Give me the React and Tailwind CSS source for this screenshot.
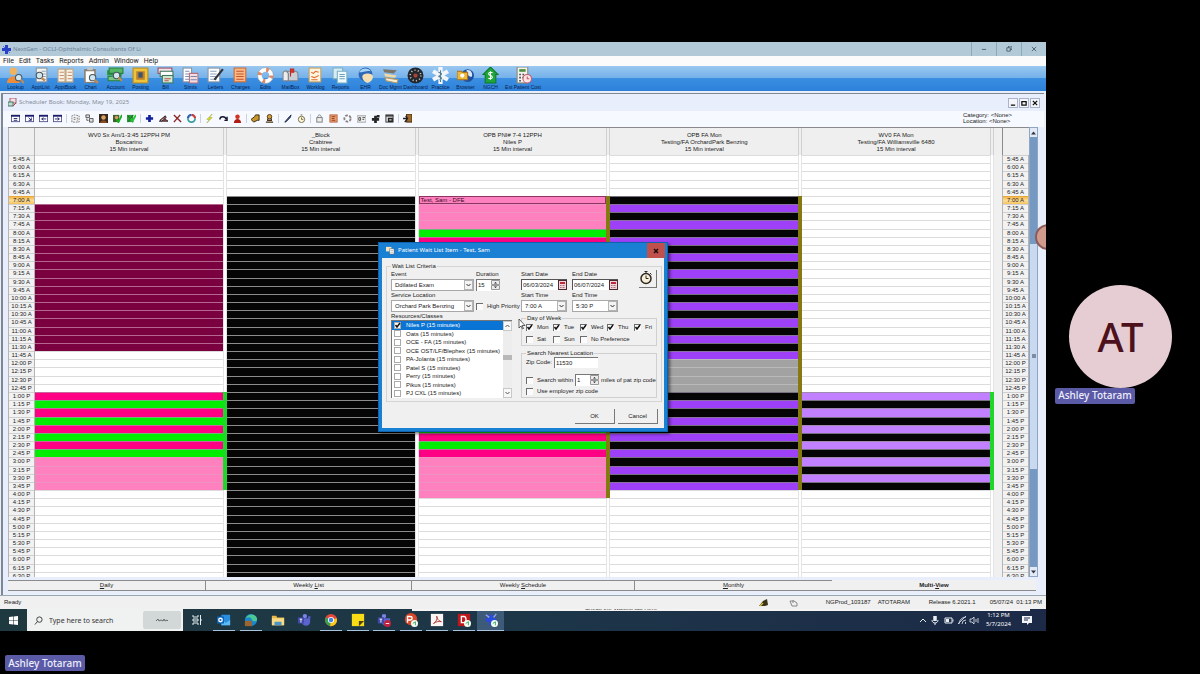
import React from "react";

const C = {
  maroon: "bg-[#7b0040] border-[#b4668e]",
  black: "bg-[#050505] border-[#8c8c8c]",
  hot: "bg-[#ff0084] border-[#c8689c]",
  green: "bg-[#00ec00] border-[#6fb47a]",
  pink: "bg-[#ff80bf] border-[#f092c0]",
  night: "bg-[#050505] border-[#77707f]",
  purple: "bg-[#9d40f8] border-[#8a72a0]",
  lav: "bg-[#c080ff] border-[#a08ab0]",
  gray: "bg-[#a2a2a2] border-[#b9b9b9]",
  none: "bg-white border-[#dcdcdc]",
};

const TIMES = Array.from({ length: 52 }, (_, i) => {
  const m = 345 + i * 15;
  const h = Math.floor(m / 60);
  return `${h > 12 ? h - 12 : h}:${String(m % 60).padStart(2, "0")} ${h < 12 ? "A" : "P"}`;
});

const PLAIN = "bg-white border-x border-[#e4e4e4]";

const COLUMNS = [
  {
    head: ["WV0 Sx Am/1-3:45 12PPH PM", "Boscarino"],
    cell: (i) => (i >= 6 && i <= 23 ? "maroon" : i >= 37 && i <= 40 ? "pink" : i >= 29 && i <= 36 ? (i % 2 ? "hot" : "green") : "none"),
    strip: (i) => (i >= 29 && i <= 40 ? "bg-[#1fd62b]" : PLAIN),
  },
  { head: ["_Block", "Crabtree"], cell: (i) => (i >= 5 ? "black" : "none"), strip: () => PLAIN },
  {
    head: ["OPB PNI# 7-4 12PPH", "Niles P"],
    cell: (i) => (i < 5 || i > 41 ? "none" : i < 9 || i > 36 ? "pink" : i % 2 ? "green" : "hot"),
    strip: (i) => (i >= 5 && i <= 41 ? "bg-[#857a10]" : PLAIN),
  },
  {
    head: ["OPB FA Mon", "Testing/FA OrchardPark Benzing"],
    cell: (i) => (i < 5 || i > 40 ? "none" : i >= 25 && i <= 28 ? "gray" : i % 2 ? "night" : "purple"),
    strip: (i) => (i >= 5 && i <= 40 ? "bg-[#857a10]" : PLAIN),
  },
  {
    head: ["WV0 FA Mon", "Testing/FA Williamsville 6480"],
    cell: (i) => (i < 29 || i > 40 ? "none" : i % 2 ? "lav" : "night"),
    strip: (i) => (i >= 29 && i <= 40 ? "bg-[#1fd62b]" : PLAIN),
  },
];

const ROWS = "grid grid-rows-[repeat(52,minmax(0,1fr))]";

function TimeColumn() {
  return (
    <div className={`${ROWS} -mb-[3px] w-[27px] shrink-0 border-x border-[#b5b5b5] bg-[#f2f2f2]`}>
      {TIMES.map((t) => (
        <div
          key={t}
          className={`border-t text-center leading-[7px] ${t === "7:00 A" ? "border-[#e8a93c] bg-gradient-to-b from-[#f6b84a] via-[#fbdc96] to-[#f6c25c]" : "border-[#d0d0d0]"}`}
        >
          {t}
        </div>
      ))}
    </div>
  );
}

function DayColumn({ col, index }) {
  return (
    <div className="-mb-[3px] flex min-w-0 flex-1">
      <div className={`${ROWS} min-w-0 flex-1`}>
        {TIMES.map((t, i) => (
          <div key={t} className={`border-t ${index === 2 && i === 5 ? "border-[#8e3464] bg-[#ff80bf]" : C[col.cell(i)]}`}>
            {index === 2 && i === 5 && (
              <div className="border-b border-l border-r border-[#8e3464] px-px leading-[6px] text-[#3b0b25]">Test, Sam - DFE</div>
            )}
          </div>
        ))}
      </div>
      <div className={`${ROWS} w-1 shrink-0`}>
        {TIMES.map((t, i) => (
          <div key={t} className={col.strip(i)} />
        ))}
      </div>
    </div>
  );
}

const Doc = ({ f = "#fff", s = "#8a93a0", x = 3, w = 10 }) => <rect x={x} y="1" width={w} height="13" fill={f} stroke={s} />;
const Lens = ({ x = 9, y = 9 }) => (
  <g>
    <circle cx={x} cy={y} r="3" fill="#cfe6ee" stroke="#4a5560" />
    <path d={`M${x + 2} ${y + 2}l3 3`} stroke="#c28b52" strokeWidth="2" />
  </g>
);
const Lines = ({ c = "#8ba3bd", x = 5, w = 6 }) => <path d={`M${x} 4h${w}M${x} 6.500h${w}M${x} 9h${w}M${x} 11.500h${w}`} stroke={c} />;

const APP_ICONS = [
  ["Lookup", <><circle cx="6" cy="4" r="3.500" fill="#f2b35e" /><path d="M0 15c0-8 12-8 12 0z" fill="#ee8c3a" /><Lens x={11} y={10} /></>],
  ["ApptList", <><Doc x={4} w={10} f="#f4f4ec" /><Lines x={9} w={4} /><Lens x={7} y={8} /></>],
  ["ApptBook", <><path d="M1 2h6.500v12H1zM8.500 2H15v12H8.500z" fill="#f8f2e6" stroke="#c2a985" /><path d="M2.500 5h4M2.500 8h4M2.500 11h4M10 5h4M10 8h4M10 11h4" stroke="#c88f69" /></>],
  ["Chart", <><rect x="2" y="2" width="11" height="13" fill="#8d8172" /><rect x="3.500" y="4" width="8" height="10" fill="#fff" /><rect x="5" y="0" width="5" height="3" fill="#bfc6cc" /><Lens x={10} y={10} /></>],
  ["Account", <><path d="M0 3h14v5H0z" fill="#2d9c47" /><path d="M2 1h13v5H2z" fill="#54b765" stroke="#257f3a" /><path d="M1 9l12-1v5H1z" fill="#79c780" stroke="#257f3a" /><Lens x={9} y={8} /></>],
  ["Posting", <><rect x="1" y="1" width="14" height="14" fill="#efc33c" stroke="#b98c1c" /><rect x="4" y="4" width="8" height="8" fill="#b98130" /><rect x="6" y="5" width="4" height="5" fill="#41546e" /></>],
  ["Bill", <><rect x="1" y="1" width="13" height="5" fill="#f4e4ea" stroke="#9c4b60" /><rect x="3" y="4" width="12" height="5" fill="#fff" stroke="#3e7a60" /><rect x="5" y="8" width="10" height="7" fill="#cfe8d2" stroke="#3e7a60" /><path d="M7 11h6M7 13h4" stroke="#c24f4f" /></>],
  ["Stmts", <><Doc x={1} w={8} /><Lines x={3} w={4} c="#7f8fb0" /><path d="M7 6h8v9H7z" fill="#f4dce0" stroke="#b8727f" /><path d="M8 9h6M8 12h6" stroke="#7787ab" /></>],
  ["Letters", <><Doc x={1} w={11} /><Lines x={3} w={6} /><path d="M15 2L7 12" stroke="#31353c" strokeWidth="2" /></>],
  ["Charges", <><Doc x={2} w={11} f="#f9b988" s="#d4692c" /><Lines x={4} w={7} c="#c4562a" /></>],
  ["Edits", <><circle cx="8" cy="8" r="5.500" fill="none" stroke="#fff" strokeWidth="4" /><circle cx="8" cy="8" r="5.500" fill="none" stroke="#de8a63" strokeWidth="4" strokeDasharray="2.500 6.140" /><circle cx="8" cy="8" r="7.500" fill="none" stroke="#8d99a8" strokeWidth=".6" /></>],
  ["MailBox", <><path d="M1 6c0-3 5-3 5 0v7H1z" fill="#ececec" stroke="#888" /><path d="M4 4h8c3 0 3 2 3 3v6H6V6z" fill="#c9ced4" stroke="#7f868e" /><path d="M8 9V2h3v3H9" fill="#d33a2f" stroke="#c32820" /></>],
  ["Worklog", <><Doc x={2} w={11} f="#fff5df" s="#cba25a" /><path d="M4 5l2 1 2-2 3 1M4 9l3 1 4-2M4 12h6" stroke="#e06c2d" fill="none" /></>],
  ["Reports", <><path d="M1 1h9v10H1z" fill="#d6ecf3" stroke="#7eafc2" /><path d="M5 4h9v11H5z" fill="#eef9fc" stroke="#7eafc2" /><path d="M7 7h5M7 9h5M7 11h5" stroke="#6ca0b8" /></>],
  ["EHR", <><circle cx="8" cy="7" r="6.500" fill="#2c69b8" /><path d="M2 5c3-5 9-4 11-1-4-1-7 1-11 1z" fill="#a8d2f4" /><path d="M5 9c0-4 10-4 10 0 0 3-2 5-5 6-3-1-5-3-5-6z" fill="#f5dfb0" /></>],
  ["Doc Mgmt", <><path d="M1 2l13 1-3 3-9-1z" fill="#7d7468" /><path d="M2 6l12 2-2 2-9-1z" fill="#f0d9a4" /><path d="M3 10l12 2-1 3-10-2z" fill="#f7eed6" stroke="#b89b62" /></>],
  ["Dashboard", <><circle cx="8" cy="8" r="7.500" fill="#24272c" /><circle cx="8" cy="8" r="5" fill="none" stroke="#c7cbd0" strokeDasharray="1 2.140" strokeWidth="1.500" /><circle cx="8" cy="8" r="2" fill="#a7443c" /></>],
  ["Practice", <><path d="M8 0v16M1 4l14 8M15 4L1 12" stroke="#f2f6fa" strokeWidth="4" /><path d="M8 3v11M6 5c4 1 4 2 0 4M6 9c4 1 4 2 1 3" stroke="#4d7e8e" fill="none" /></>],
  ["Browser", <><circle cx="10" cy="8" r="6" fill="#1e4fa0" /><path d="M9 3c4-1 6 3 5 6-2 1-5-2-5-6z" fill="#d8e8f8" /><path d="M0 4h4l1 1h5v7H0z" fill="#efb637" stroke="#a8721c" /><circle cx="5" cy="8" r="2" fill="#fff" /></>],
  ["NGCH", <><path d="M8 0l7 7h-2v8H3V7H1z" fill="#1fa53c" stroke="#0e7a29" /><path d="M10 5.500c-4-1.500-5 1.500-2 2.500s2 4-2 2.500M8 4v8" stroke="#fff" fill="none" /></>],
  ["Est Patient Cost", <><rect x="2" y="0" width="10" height="15" fill="#f3f3ee" stroke="#8d8878" /><rect x="4" y="2" width="6" height="2.500" fill="#4d8f43" /><path d="M4 7h1.500M7 7h1.500M4 10h1.500M7 10h1.500M4 13h1.500" stroke="#444" strokeWidth="1.500" /><circle cx="11.500" cy="11" r="4" fill="#fbe3e6" stroke="#c45a68" /><path d="M11.500 9v2h2" stroke="#c45a68" fill="none" /></>],
];

const Cal = ({ d }) => (
  <>
    <rect x=".5" y="1.500" width="9" height="7" fill="#fff" stroke="#55558f" />
    <path d="M0 2h10" stroke="#1c1c6c" strokeWidth="2" />
    <path d={d} fill="none" stroke="#20206a" />
  </>
);

const TOOL_GROUPS = [
  [
    ["Day list", <Cal d="M3 5h4M3 7h4" />],
    ["Go to date", <Cal d="M4 4l3 3M7 4v3H4" />],
    ["Previous", <Cal d="M8 5.500H3M5 4L3 5.500 5 7" />],
    ["Next", <Cal d="M2 5.500h5M5 4l2 1.500L5 7" />],
  ],
  [
    ["Select", <path d="M1 9V2l3-1 5 1v7zM3 4h3M3 6h2M7 4v4" fill="#f5f5f5" stroke="#777" strokeDasharray="2 1" />],
    ["Split", <><path d="M1 1h4v3H1zM5 5h4v4H5z" fill="#ddd" stroke="#555" /><path d="M2 5v2h2" stroke="#555" fill="none" /></>],
    ["Patient", <><rect width="10" height="10" y="0" fill="#35281c" /><circle cx="5" cy="4" r="2.500" fill="#dba065" /><path d="M1 10c1-4 7-4 8 0z" fill="#8a4a22" /></>],
    ["Check in", <><rect x="0" y="1" width="7" height="8" fill="#40602c" /><circle cx="4" cy="4" r="2" fill="#d89a60" /><path d="M4 6l2 3 4-8" stroke="#10b020" strokeWidth="2" fill="none" /></>],
    ["Check out", <><rect x="0" y="1" width="7" height="8" fill="#2f9a3a" /><path d="M1 2l6 7M7 1L1 9" stroke="#126a1c" /><path d="M4 5l2 3 4-7" stroke="#26c436" strokeWidth="2" fill="none" /></>],
  ],
  [
    ["Add", <path d="M5 1v8M1 5h8" stroke="#10209c" strokeWidth="3" />],
    ["Edit", <path d="M0 8h10L6 5M1 7l6-5 1 2-5 4z" fill="#a05050" stroke="#2c2224" />],
    ["Delete", <path d="M1 1l8 8M8 1L1 9" stroke="#8d2320" strokeWidth="1.500" />],
    ["Refresh", <><path d="M1 5a4 4 0 014-4" stroke="#2a60b8" strokeWidth="2.500" fill="none" /><path d="M5 1a4 4 0 014 4" stroke="#c43a3a" strokeWidth="2.500" fill="none" /><path d="M9 5a4 4 0 01-8 0" stroke="#38a0a0" strokeWidth="2" fill="none" /></>],
  ],
  [
    ["Quick", <path d="M8 0L2 6h3L2 10l6-6H5z" fill="#e4e020" stroke="#8a9a18" strokeWidth=".5" />],
    ["Redo", <path d="M1 6c0-4 6-4 7 0M9 3v4H6" stroke="#15152c" fill="none" strokeWidth="1.500" />],
    ["Alert", <><circle cx="5" cy="3" r="2.500" fill="#d23220" /><path d="M1 10c0-6 8-6 8 0z" fill="#b01c14" /></>],
  ],
  [
    ["Move", <path d="M0 6l4-3 1-2h4v6H7L3 9z" fill="#c9962c" stroke="#352408" />],
    ["Stamp", <><circle cx="5" cy="3" r="2.500" fill="#d6a23c" stroke="#4a3210" /><path d="M1 9h8M3 5v2h4V5" stroke="#4a3210" strokeWidth="1.500" fill="none" /></>],
  ],
  [
    ["Draw", <path d="M2 9l5-6 2-2-1 3-5 5z" fill="#45608c" stroke="#1d2744" />],
    ["Clock", <><circle cx="5" cy="6" r="3.500" fill="#fff8d8" stroke="#6c6440" /><path d="M5 4v2h2M4 1h2" stroke="#6c6440" fill="none" /></>],
  ],
  [
    ["Lock", <><rect x="2" y="4" width="6" height="5" fill="#eee" stroke="#777" /><path d="M3 4c0-4 4-4 4 0" fill="none" stroke="#777" /></>],
    ["Charges", <><rect x="1" y="1" width="8" height="8" fill="#eca070" stroke="#b8623c" /><path d="M3 3h4M3 5h3M3 7h4" stroke="#8c3a1c" /></>],
    ["Help ring", <circle cx="5" cy="5" r="3.500" fill="none" stroke="#8a8080" strokeWidth="2" strokeDasharray="3 1.500" />],
    ["Card", <><rect x="0" y="2" width="10" height="7" fill="#f4f4f4" stroke="#999" /><path d="M2 4h2v3H2zM6 4h3M6 6h2" stroke="#444" fill="none" /></>],
    ["Medical", <path d="M1 6h8M5 2v8M8 1v3" stroke="#262626" strokeWidth="3" />],
    ["Schedule", <><rect x="1" y="1" width="8" height="8" fill="#ddd" stroke="#333" /><path d="M1 2h8M4 5h4v3H4z" stroke="#222" strokeWidth="1.500" fill="none" /></>],
  ],
  [["Exit", <><rect x="4" y="0" width="6" height="9" fill="#a06a28" stroke="#3a240c" /><path d="M0 5h5M3 2l2 3-3 4" stroke="#202020" strokeWidth="1.500" fill="none" /></>]],
];

function Check({ label, checked, className = "" }) {
  return (
    <label className={`flex items-center gap-1 whitespace-nowrap ${className}`}>
      <span className="relative size-[7px] shrink-0">
        <input type="checkbox" defaultChecked={checked} className="peer block size-[7px] appearance-none border-l border-t border-[#6c6c6c] bg-white/70" />
        <svg viewBox="0 0 7 7" className="pointer-events-none absolute inset-0 hidden size-[7px] peer-checked:block">
          <path d="M1.500 3l1.500 2 3-4" fill="none" stroke="#111" strokeWidth="1.500" />
        </svg>
      </span>
      {label}
    </label>
  );
}

function Select({ label, value, className }) {
  return (
    <div className={`flex shrink-0 flex-col ${className}`}>
      <label htmlFor={label} className="h-[9px]">{label}</label>
      <span className="relative">
        <select id={label} className="block h-3 w-full appearance-none rounded-none border border-[#a8a8a8] bg-white pl-[3px]">
          <option>{value}</option>
        </select>
        <svg viewBox="0 0 9 10" className="pointer-events-none absolute right-px top-px h-[10px] w-[9px]">
          <rect x=".5" y=".5" width="8" height="9" fill="#f4f4f4" stroke="#b4b4b4" />
          <path d="M2.500 4l2 2 2-2" fill="none" stroke="#333" />
        </svg>
      </span>
    </div>
  );
}

function Spinner({ id, value, label }) {
  return (
    <span className="flex h-3 w-6 shrink-0 border-l border-t border-[#777] bg-white">
      <input id={id} aria-label={label} defaultValue={value} className="w-3 min-w-0 flex-1 bg-transparent pl-px" />
      <svg viewBox="0 0 9 10" className="h-[10px] w-[9px] shrink-0">
        <path d="M.5.500h8v4h-8zM.5 5.500h8v4h-8z" fill="#ececec" stroke="#999" />
        <path d="M3 3.500L4.500 2 6 3.500zM3 6.500L4.500 8 6 6.500z" fill="#222" />
      </svg>
    </span>
  );
}

function DateField({ label, value }) {
  return (
    <div className="flex w-[46px] flex-col">
      <label htmlFor={label} className="h-[9px]">{label}</label>
      <span className="flex h-[11px] items-center border-l border-t border-[#555] bg-white">
        <input id={label} defaultValue={value} className="min-w-0 flex-1 bg-transparent pl-px" />
        <button aria-label={`Pick ${label}`} className="shrink-0">
          <svg viewBox="0 0 9 10" className="block h-[10px] w-[9px]">
            <rect x=".5" y=".5" width="8" height="9" fill="#f0d4d8" stroke="#4a2a30" />
            <path d="M2 3h5" stroke="#c2283c" strokeWidth="2" />
            <path d="M2 5.500h5M2 7.500h5" stroke="#a8707c" strokeDasharray="1 .5" />
          </svg>
        </button>
      </span>
    </div>
  );
}

const RESOURCES = ["Niles P", "Oats", "OCE - FA", "OCE OST/LF/Blephex", "PA-Jolanta", "Patel S", "Perry", "Pikus", "PJ CXL"];

function WaitListDialog() {
  return (
    <section role="dialog" aria-label="Patient Wait List Item" className="absolute left-[378px] top-[200px] z-10 w-[290px] border border-[#0f62ac] bg-[#1a80d4] px-[3px] pb-[3px] text-[#222] shadow-[2px_2px_3px_rgba(0,0,0,.5)]">
      <header className="flex h-[15px] items-center font-['Noto_Sans',sans-serif] text-white">
        <svg viewBox="0 0 10 10" className="ml-1 size-[9px]">
          <rect x="0" y="1" width="6" height="5" fill="#f5e6c0" /><path d="M4 3h5v6H4z" fill="#fff" stroke="#444" strokeWidth=".5" /><path d="M5 5h3M5 7h3" stroke="#888" strokeWidth=".6" />
        </svg>
        <h2 className="ml-[3px] flex-1">Patient Wait List Item - Test, Sam</h2>
        <button aria-label="Close" className="-mr-px flex h-[15px] w-[18px] items-center justify-center bg-[#c0504c]">
          <svg viewBox="0 0 6 6" className="size-[6px]"><path d="M1 1l4 4M5 1L1 5" stroke="#1c0a0a" strokeWidth="1.500" /></svg>
        </button>
      </header>
      <div className="bg-[#f0f0f0] pb-1 pl-1 pr-[6px] pt-1">
        <fieldset className="border border-[#d4d4d4] px-1 pb-[3px]">
          <legend className="px-px leading-[8px]">Wait List Criteria</legend>
          <div className="flex gap-[3px]">
            <div className="flex w-[127px] shrink-0 flex-col">
              <div className="flex gap-[2px]">
                <Select label="Event" value="Ddilated Exam" className="w-[83px]" />
                <div>
                  <label htmlFor="duration" className="block h-[9px]">Duration</label>
                  <Spinner id="duration" value="15" label="Duration" />
                </div>
              </div>
              <div className="flex gap-[2px]">
                <Select label="Service Location" value="Orchard Park Benzing" className="w-[83px]" />
                <Check label="High Priority" className="mt-[9px]" />
              </div>
              <span className="leading-[8px]">Resources/Classes</span>
              <div className="flex h-[78px] w-[121px] border-l border-t border-[#777] bg-white">
                <ul className="grid min-w-0 flex-1 grid-rows-[repeat(9,1fr)] overflow-hidden">
                  {RESOURCES.map((r, i) => (
                    <li key={r} className={`overflow-hidden ${i ? "" : "bg-[#0a74d4] text-white"}`}>
                      <label className="flex items-center gap-[5px] whitespace-nowrap leading-[8px]">
                        <span className="relative ml-[2px] size-[7px] shrink-0">
                          <input type="checkbox" defaultChecked={!i} className="peer block size-[7px] appearance-none border border-[#aaa] bg-white" />
                          <svg viewBox="0 0 7 7" className="pointer-events-none absolute inset-0 hidden size-[7px] peer-checked:block">
                            <path d="M1.500 3l1.500 2 3-4" fill="none" stroke="#111" strokeWidth="1.500" />
                          </svg>
                        </span>
                        {r} (15 minutes)
                      </label>
                    </li>
                  ))}
                </ul>
                <svg viewBox="0 0 9 77" className="h-[77px] w-[9px] shrink-0">
                  <rect width="9" height="77" fill="#ededed" />
                  <rect x=".5" y=".5" width="8" height="9" fill="#f8f8f8" stroke="#c8c8c8" />
                  <rect x=".5" y="67.500" width="8" height="9" fill="#f8f8f8" stroke="#c8c8c8" />
                  <path d="M2.500 6l2-2 2 2M2.500 71l2 2 2-2" fill="none" stroke="#555" />
                  <rect x="0" y="34" width="9" height="5" fill="#b8b8b8" />
                </svg>
              </div>
            </div>
            <div className="flex min-w-0 flex-1 flex-col">
              <div className="flex items-start gap-[5px]">
                <DateField label="Start Date" value="06/03/2024" />
                <DateField label="End Date" value="06/07/2024" />
                <button aria-label="History" className="ml-auto border-b border-r border-[#777] pb-px pr-px">
                  <svg viewBox="0 0 16 16" className="size-4">
                    <circle cx="7" cy="8.500" r="5" fill="#f6efdc" stroke="#30281e" strokeWidth="1.500" />
                    <path d="M7 5.500v3h2.500M5.500 1.500h3M7 1.500v2M11 3l1.500 1.500" stroke="#30281e" fill="none" />
                  </svg>
                </button>
              </div>
              <div className="flex gap-[5px] pt-px">
                <Select label="Start Time" value="7:00 A" className="w-[46px]" />
                <Select label="End Time" value="5:30 P" className="w-[46px]" />
              </div>
              <fieldset className="mt-[2px] border border-[#d0d0d0] pl-1">
                <legend className="px-px leading-[8px]">Day of Week</legend>
                <div className="grid h-[23px] grid-cols-[27px_27px_27px_27px_1fr]">
                  <Check label="Mon" checked />
                  <Check label="Tue" checked />
                  <Check label="Wed" checked />
                  <Check label="Thu" checked />
                  <Check label="Fri" checked />
                  <Check label="Sat" />
                  <Check label="Sun" />
                  <Check label="No Preference" className="col-span-3" />
                </div>
              </fieldset>
              <fieldset className="mt-[3px] border border-[#d0d0d0] pb-px pl-1">
                <legend className="px-px leading-[8px]">Search Nearest Location</legend>
                <div className="flex items-center gap-[2px]">
                  <label htmlFor="zip">Zip Code:</label>
                  <input id="zip" defaultValue="11530" className="h-[11px] w-11 border-l border-t border-[#777] bg-white pl-px" />
                </div>
                <div className="mt-[6px] flex items-center gap-[2px] whitespace-nowrap">
                  <Check label="Search within" />
                  <Spinner value="1" label="Miles" />
                  <span>miles of pat zip code</span>
                </div>
                <Check label="Use employer zip code" className="mt-px" />
              </fieldset>
            </div>
          </div>
        </fieldset>
        <div className="mt-[7px] flex justify-end gap-[3px]">
          <button className="h-[15px] w-10 border-b border-r border-[#777]">OK</button>
          <button className="h-[15px] w-10 border-b border-r border-[#777]">Cancel</button>
        </div>
      </div>
      <svg viewBox="0 0 8 12" className="absolute left-[139px] top-[75px] h-3 w-2">
        <path d="M1 1v9l2-2 1.500 3 1-.5L4 7.500h3z" fill="#fff" stroke="#222" strokeWidth=".7" />
      </svg>
    </section>
  );
}

const TASKS = [
  ["Outlook", 1, <><rect x="5" y="2" width="10" height="12" fill="#2a8ee0" /><path d="M5 8l5 3 5-3v6H5z" fill="#5bbcf5" /><rect x="0" y="4" width="8" height="8" fill="#0b64b8" /><circle cx="4" cy="8" r="2" fill="none" stroke="#fff" strokeWidth="1.500" /></>],
  ["Edge", 1, <><circle cx="8" cy="8" r="7" fill="#1c86cf" /><path d="M2 6c2-6 12-6 13 1 0 3-4 3-6 1 0-3-4-4-7-2z" fill="#4cc992" /><rect x="1" y="9" width="8" height="6" fill="#9a6530" /></>],
  ["File Explorer", 0, <><path d="M1 3h5l1 2h8v9H1z" fill="#e9b84a" /><path d="M1 6h14v8H1z" fill="#fadb85" /><path d="M4 10h8v4H4z" fill="#4b94c8" /></>],
  ["Teams", 0, <><circle cx="9" cy="3.500" r="2.500" fill="#7b83eb" /><circle cx="14" cy="5" r="1.500" fill="#5059c9" /><path d="M5 6h10v4c0 6-9 6-10 0z" fill="#5b63cf" /><rect x="1" y="5" width="7" height="7" fill="#4048a8" /><path d="M3 7h3M4.500 7v4" stroke="#fff" /></>],
  ["Chrome", 1, <><circle cx="8" cy="8" r="7" fill="#e2493b" /><path d="M8 8L2 5a7 7 0 005 10z" fill="#35a352" /><path d="M8 8l-1 7A7 7 0 0014.500 6z" fill="#f8c91c" /><circle cx="8" cy="8" r="3.500" fill="#fff" /><circle cx="8" cy="8" r="2.500" fill="#3f7ee8" /></>],
  ["Sticky Notes", 1, <><rect x="1" y="1" width="14" height="14" fill="#f9dc16" /><path d="M9 15V9h6z" fill="#4c4212" /></>],
  ["Teams call", 1, <><circle cx="8" cy="3.500" r="2.500" fill="#7b83eb" /><path d="M5 6h10v4c0 6-9 6-10 0z" fill="#5b63cf" /><rect x="1" y="5" width="7" height="7" fill="#4048a8" /><path d="M3 7h3M4.500 7v4" stroke="#fff" /><circle cx="12" cy="12" r="4" fill="#c4213e" /><path d="M10 12h4" stroke="#fff" /></>],
  ["PowerPoint", 1, <><circle cx="8" cy="7" r="7" fill="#d9472b" /><path d="M4 11V4h3c3 0 3 4 0 4H4" stroke="#fff" fill="none" strokeWidth="1.500" /><circle cx="12" cy="12" r="4" fill="#f4fff4" /><path d="M10 12l3-2v4" stroke="#2a9c55" fill="none" /></>],
  ["Acrobat Reader", 1, <><rect x="1" y="1" width="14" height="14" fill="#fbf5f4" /><path d="M4 12c3-2 5-6 4-8s-1 4 5 6c-3-1-6 0-9 2z" stroke="#a32a24" fill="none" /></>],
  ["Acrobat", 1, <><rect x="1" y="1" width="14" height="14" fill="#c0171c" /><path d="M5 11V4h3c3 0 3 7 0 7z" stroke="#fff" fill="none" strokeWidth="1.500" /><circle cx="12" cy="12" r="4" fill="#f4fff4" /><path d="M10 12l3-2v4" stroke="#2a9c55" fill="none" /></>],
  ["NextGen", 2, <><path d="M6 2h4v12H6zM2 6h12v4H2z" fill="#2b4ae2" /><path d="M2 2l4 3M14 1l-3 4" stroke="#8fa6ff" strokeWidth="1.500" /><circle cx="12" cy="12" r="4" fill="#f4fff4" /><path d="M10 12l3-2v4" stroke="#2a9c55" fill="none" /></>],
];

function NameTag() {
  return (
    <span className="flex h-4 w-20 items-center justify-center whitespace-nowrap rounded-[2px] bg-[#5b5aa6] font-['Noto_Sans',sans-serif] text-[10px] font-medium text-[#eeeefc]">
      Ashley Totaram
    </span>
  );
}

function TabBar() {
  const tab = "flex items-center justify-center border-r border-t border-b border-[#8b8b8b] bg-[#f0f0f0]";
  return (
    <nav className="ml-[5px] mr-[8px] mt-[3px] flex h-[11px]">
      <button className={`${tab} flex-[198]`}><span><u>D</u>aily</span></button>
      <button className={`${tab} flex-[206]`}><span>Weekly <u>L</u>ist</span></button>
      <button className={`${tab} flex-[223]`}><span>Weekly <u>S</u>chedule</span></button>
      <button className={`${tab} flex-[198] !border-r-0`}><span><u>M</u>onthly</span></button>
      <button className="flex flex-[205] items-center justify-center border-b border-[#8b8b8b] bg-[#f0f0f0] font-bold"><span>Multi-<u>V</u>iew</span></button>
    </nav>
  );
}

function Taskbar() {
  return (
    <footer className="relative flex h-[22px] shrink-0 items-stretch bg-gradient-to-r from-[#1f3940] via-[#1d3648] to-[#1c2a48] text-white">
      <div className="absolute left-[412px] right-4 top-0 flex h-[2px] items-end justify-center overflow-hidden bg-[#f4f4f4] pr-[200px] text-[#333]">
        <span className="leading-[6px]">Check the Waitlist tab Here</span>
      </div>
      <button aria-label="Start" className="flex w-[27px] items-center justify-center">
        <svg viewBox="0 0 9 9" className="size-[9px]" fill="#fff"><path d="M0 1l4-.5v3.700H0zM4.600.400L9 0v4.200H4.600zM0 4.800h4v3.700L0 8zM4.600 4.800H9V9l-4.400-.5z" /></svg>
      </button>
      <label className="flex w-[156px] items-center bg-[#f0f1f1] pl-[7px] pr-[2px] font-['Noto_Sans',sans-serif]">
        <svg viewBox="0 0 10 10" className="size-[9px]" fill="none" stroke="#333"><circle cx="6" cy="4" r="3" /><path d="M4 6L1 9.500" /></svg>
        <input aria-label="Search" placeholder="Type here to search" className="ml-[6px] min-w-0 flex-1 bg-transparent text-[7px] placeholder:text-[#333]" />
        <span className="flex h-[18px] w-[38px] items-center justify-center rounded-[2px] bg-[#d2d7d7]">
          <svg viewBox="0 0 14 4" className="h-1 w-[14px]"><path d="M1 3l2-2 1 2 2-1 2 1 1-2 1 2 2-1 1 1" stroke="#5f6b6b" fill="none" /></svg>
        </span>
      </label>
      <button aria-label="Task View" className="flex w-7 items-center justify-center">
        <svg viewBox="0 0 10 10" className="size-[10px]" fill="none" stroke="#e4ecee"><path d="M1 0v2h5V0M1 10V8h5v2M1 4h5v2H1zM8.500 0v10M8 5h2" /></svg>
      </button>
      <div className="flex w-[293px]">
        {TASKS.map(([n, s, art]) => (
          <button key={n} aria-label={n} className={`flex flex-1 flex-col items-center justify-between pt-1 ${s === 2 ? "bg-[#3d5a78]" : ""}`}>
            <svg viewBox="0 0 16 16" className="size-[14px]">{art}</svg>
            <span className={`h-px ${s === 2 ? "w-full" : "w-[22px]"} ${s ? "bg-[#a8c4dc]" : ""}`} />
          </button>
        ))}
      </div>
      <div className="ml-auto flex items-center gap-[5px] pr-[14px] font-['Noto_Sans',sans-serif]">
        <svg viewBox="0 0 60 10" className="h-[10px] w-[60px]" fill="none" stroke="#e8eef4">
          <path d="M1 7l3-3 3 3" />
          <path d="M16 1v5" strokeWidth="3.500" /><path d="M13 5c0 4 6 4 6 0M16 8v2" />
          <path d="M26 3h7v5h-7zM34 4.500v2" /><path d="M27 5.500h3" strokeWidth="3" />
          <path d="M40 9a7 7 0 017-7M43 9a4 4 0 014-4M46.500 9V7M39 9l8-8" strokeWidth=".8" />
          <path d="M51 4h2l2-2v7l-2-2h-2zM57 4v3M59 3v5" strokeWidth=".8" />
        </svg>
        <div className="ml-[2px] text-center leading-[9px]"><div>1:12 PM</div><div>5/7/2024</div></div>
        <svg viewBox="0 0 10 10" className="ml-[6px] size-[10px]"><path d="M0 1h10v7H7l-2 2V8H0z" fill="#f2f5f8" /><path d="M2 3h6M2 5h4" stroke="#1c2a48" /></svg>
      </div>
    </footer>
  );
}

function Header() {
  return (
    <div className="flex h-7 shrink-0 border-t border-[#8a8a8a] bg-[#efefef] text-center">
      <div className="w-[27px] shrink-0 border-x border-[#b5b5b5]" />
      {COLUMNS.map((c) => (
        <div key={c.head[0]} className="flex min-w-0 flex-1">
          <div className="min-w-0 flex-1 pt-1 leading-[7px]">
            {c.head.map((h) => <div key={h}>{h}</div>)}
            <div>15 Min interval</div>
          </div>
          <div className="w-1 border-x border-[#d0d0d0]" />
        </div>
      ))}
      <div className="w-2 shrink-0" />
      <div className="w-[27px] shrink-0 border-l border-[#8a8a8a]" />
    </div>
  );
}

export default function App() {
  return (
    <div className="flex min-h-screen bg-black font-['Liberation_Sans',sans-serif] text-[6px] leading-[9px] text-[#222]">
      <div className="flex min-w-0 flex-1 flex-col pt-[42px]">
        <main className="relative flex flex-1 flex-col overflow-hidden bg-[#e9eff8]">
          <header className="flex h-[14px] shrink-0 items-center bg-[#b2c9d8] pl-[2px] font-['Noto_Sans',sans-serif]">
            <svg viewBox="0 0 9 9" className="size-[9px]"><path d="M3 0h3v9H3zM0 3h9v3H0z" fill="#2742c8" /><path d="M1 1l2 2M6 6l2 2" stroke="#5c78ee" /></svg>
            <h1 className="ml-[2px] flex-1 text-[#6f8498]">NextGen - OCLI-Ophthalmic Consultants Of Li</h1>
            {["M1 4h5", "M1 2h4v4H1zM3 2V0h4v4H5", "M1 1l5 5M6 1L1 6"].map((d, i) => (
              <button key={d} aria-label={["Minimize", "Restore", "Close"][i]} className="flex h-full w-[25px] items-center justify-center border-l border-[#8fa9bb]">
                <svg viewBox="0 0 7 7" className="size-[6px]" fill="none" stroke="#46596a"><path d={d} /></svg>
              </button>
            ))}
          </header>
          <nav className="flex h-[10px] shrink-0 items-center gap-[5px] bg-[#fbfbfb] pl-[3px] font-[Roboto,sans-serif] text-[7px]">
            {["File", "Edit", "Tasks", "Reports", "Admin", "Window", "Help"].map((m) => <button key={m}>{m}</button>)}
          </nav>
          <div className="flex h-[25px] shrink-0 bg-[linear-gradient(#9ac8f0_0%,#73b0ea_49%,#3b8fe2_50%,#2c80d8_100%)] pl-[3px] pt-px">
            {APP_ICONS.map(([n, art]) => (
              <button key={n} className={`flex h-6 shrink-0 flex-col items-center ${n === "Est Patient Cost" ? "w-10" : "w-[25px]"}`}>
                <svg viewBox="0 0 16 16" className="size-[17px]">{art}</svg>
                <span className="whitespace-nowrap text-[5px] leading-[6px] text-[#06204f]">{n}</span>
              </button>
            ))}
          </div>
          <div className="ml-px mr-[2px] mt-[2px] flex flex-1 flex-col border-l-2 border-t border-[#7e8793] bg-[#e8eefb]">
            <header className="flex h-[17px] shrink-0 items-center pl-[5px] pr-1 font-['Noto_Sans',sans-serif]">
              <svg viewBox="0 0 9 9" className="size-[9px]"><rect x="2" y="0" width="6" height="5" fill="#f6dfe2" stroke="#a46070" /><rect x="0" y="4" width="5" height="4" fill="#c4dcd0" stroke="#44786a" /><path d="M5 8l3-3" stroke="#b43a4c" /></svg>
              <h2 className="ml-[2px] flex-1 text-[#868e9c]">Scheduler Book: Monday, May 19, 2025</h2>
              {["M1 6h5", "M1 2h5v4H1z", "M1 1l5 5M6 1L1 6"].map((d, i) => (
                <button key={d} aria-label={["Minimize book", "Restore book", "Close book"][i]} className="ml-px flex size-[10px] items-center justify-center border border-[#a9b4c6] bg-[#f4f6fc]">
                  <svg viewBox="0 0 7 7" className="size-[6px]" fill="none" stroke="#111" strokeWidth="1.500"><path d={d} /></svg>
                </button>
              ))}
            </header>
            <div className="flex h-4 shrink-0 items-center bg-[#f6f9ff] pb-[2px] pl-1">
              {TOOL_GROUPS.map((g, k) => (
                <div key={k} className="flex items-center gap-[3px] border-l border-[#ccd2da] px-[3px] first:border-l-0">
                  {g.map(([n, art]) => (
                    <button key={n} aria-label={n} className="px-px">
                      <svg viewBox="0 0 10 10" className="block h-[9px] w-[9px]" fill="none">{art}</svg>
                    </button>
                  ))}
                </div>
              ))}
              <div className="ml-auto mr-8 leading-[6px]"><div>Category: &lt;None&gt;</div><div>Location: &lt;None&gt;</div></div>
            </div>
            <div className="ml-[5px] mr-[6px] flex flex-1">
              <div className="flex min-w-0 flex-1 flex-col">
                <Header />
                <div className="flex flex-1 overflow-hidden">
                  <TimeColumn />
                  {COLUMNS.map((c, i) => <DayColumn key={c.head[0]} col={c} index={i} />)}
                  <div className="w-2 shrink-0 bg-[#f0f0f0]" />
                  <TimeColumn />
                </div>
              </div>
              <div className="flex w-[9px] shrink-0 flex-col border border-[#8ea6c4] bg-[#7699c4]">
                <button aria-label="Scroll up" className="flex h-[9px] items-center justify-center bg-[#e2eaf6]">
                  <svg viewBox="0 0 5 4" className="h-1 w-[5px]"><path d="M0 3.500L2.500.500 5 3.500z" fill="#334" /></svg>
                </button>
                <div className="flex-[108]" />
                <div className="flex flex-[226] items-center justify-center bg-[#c9daf0]"><span className="size-1 bg-[#7d8ca4]" /></div>
                <div className="flex-[99]" />
                <button aria-label="Scroll down" className="flex h-[9px] items-center justify-center bg-[#e2eaf6]">
                  <svg viewBox="0 0 5 4" className="h-1 w-[5px]"><path d="M0 .5L2.500 3.500 5 .500z" fill="#334" /></svg>
                </button>
              </div>
            </div>
            <TabBar />
            <div className="h-1 shrink-0" />
          </div>
          <div className="flex h-[14px] shrink-0 items-center border-t border-[#9aa6b4] bg-[#f0f0f0] pl-1 pr-1">
            <span className="flex-1">Ready</span>
            <svg viewBox="0 0 10 8" className="h-2 w-[10px]"><path d="M0 7l4-5 4-2 1 6-3 1z" fill="#3b3316" /><path d="M1 7l3-3" stroke="#d8b93c" strokeWidth="1.500" /></svg>
            <svg viewBox="0 0 10 8" className="ml-5 mr-[27px] h-2 w-[10px]" fill="none" stroke="#888"><path d="M1 2h4l3 2v3H3zM4 1v3" /></svg>
            <span className="w-[52px]">NGProd_103187</span>
            <span className="w-[51px]">ATOTARAM</span>
            <span className="w-[61px]">Release 6.2021.1</span>
            <span className="whitespace-nowrap">05/07/24 &nbsp;01:13 PM</span>
          </div>
          <Taskbar />
          <WaitListDialog />
          <div className="absolute -right-[15px] top-[182px] size-[26px] rounded-full border-2 border-[#8d5c58] bg-[#d09a8c]" />
        </main>
        <div className="flex h-[43px] shrink-0 items-end pb-[3px] pl-[5px]"><NameTag /></div>
      </div>
      <aside className="flex w-[154px] shrink-0 flex-col items-start justify-center pl-[9px] pt-[14px]">
        <div className="ml-[14px] flex size-[103px] items-center justify-center rounded-full bg-[#e6cdd3] font-['Noto_Sans',sans-serif] text-[40px] font-medium text-[#4c111c]">AT</div>
        <NameTag />
      </aside>
    </div>
  );
}
